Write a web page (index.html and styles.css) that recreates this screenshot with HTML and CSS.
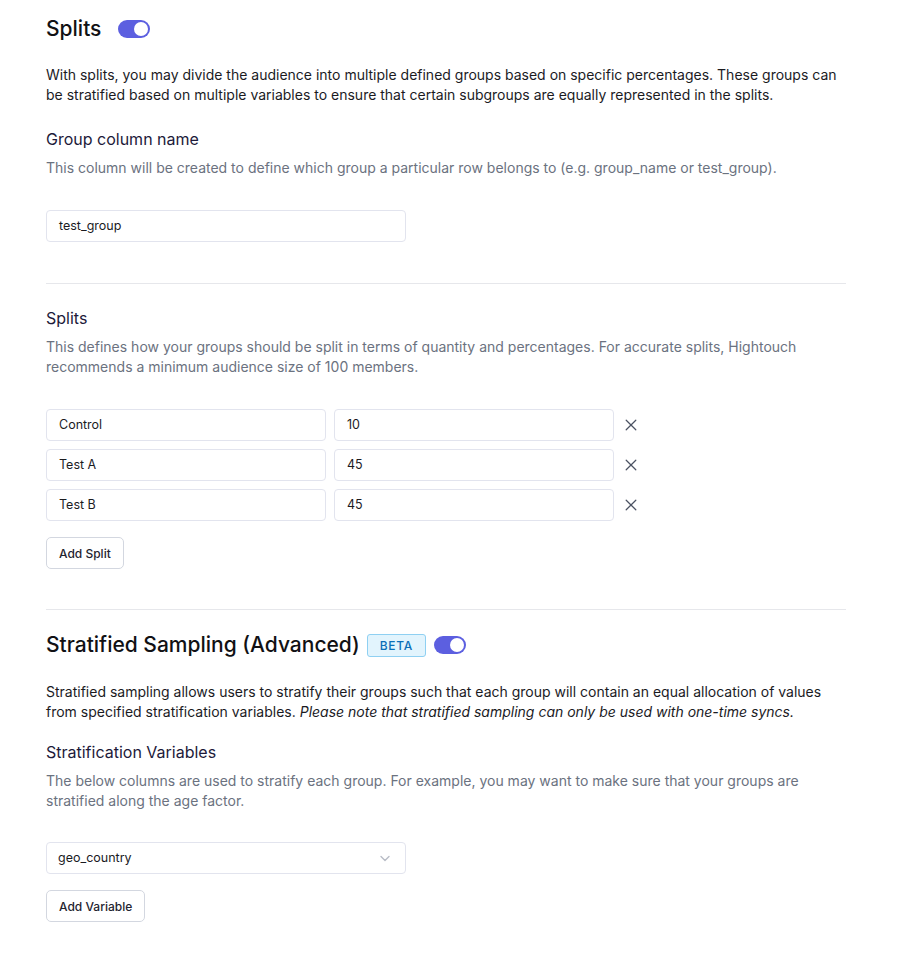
FILE: index.html
```html
<!DOCTYPE html>
<html>
<head>
<meta charset="utf-8">
<link rel="stylesheet" href="styles.css">
</head>
<body>
<main class="page">
  <section class="section">
    <div class="title-row">
      <h1 class="title">Splits</h1>
      <span class="toggle"><span class="knob"></span></span>
    </div>
    <p class="intro">With splits, you may divide the audience into multiple defined groups based on specific percentages. These groups can be stratified based on multiple variables to ensure that certain subgroups are equally represented in the splits.</p>
    <h2 class="label">Group column name</h2>
    <p class="help">This column will be created to define which group a particular row belongs to (e.g. group_name or test_group).</p>
    <div class="input wide">test_group</div>
  </section>

  <hr class="divider">

  <section class="section">
    <h2 class="label first">Splits</h2>
    <p class="help">This defines how your groups should be split in terms of quantity and percentages. For accurate splits, Hightouch recommends a minimum audience size of 100 members.</p>
    <div class="rows">
      <div class="row">
        <div class="input half">Control</div>
        <div class="input half">10</div>
        <svg class="x" width="14" height="14" viewBox="0 0 14 14"><path d="M2.2 2.2l9.6 9.6M11.8 2.2l-9.6 9.6" stroke="#4b5262" stroke-width="1.25" stroke-linecap="round"/></svg>
      </div>
      <div class="row">
        <div class="input half">Test A</div>
        <div class="input half">45</div>
        <svg class="x" width="14" height="14" viewBox="0 0 14 14"><path d="M2.2 2.2l9.6 9.6M11.8 2.2l-9.6 9.6" stroke="#4b5262" stroke-width="1.25" stroke-linecap="round"/></svg>
      </div>
      <div class="row">
        <div class="input half">Test B</div>
        <div class="input half">45</div>
        <svg class="x" width="14" height="14" viewBox="0 0 14 14"><path d="M2.2 2.2l9.6 9.6M11.8 2.2l-9.6 9.6" stroke="#4b5262" stroke-width="1.25" stroke-linecap="round"/></svg>
      </div>
    </div>
    <button class="btn">Add Split</button>
  </section>

  <hr class="divider second">

  <section class="section">
    <div class="title-row after-divider">
      <h1 class="title">Stratified Sampling (Advanced)</h1>
      <span class="badge">BETA</span>
      <span class="toggle"><span class="knob"></span></span>
    </div>
    <p class="intro">Stratified sampling allows users to stratify their groups such that each group will contain an equal allocation of values from specified stratification variables. <em>Please note that stratified sampling can only be used with one-time syncs.</em></p>
    <h2 class="label tight">Stratification Variables</h2>
    <p class="help">The below columns are used to stratify each group. For example, you may want to make sure that your groups are stratified along the age factor.</p>
    <div class="input wide select">
      <span>geo_country</span>
      <svg width="14" height="14" viewBox="0 0 14 14"><path d="M3 5.5l4 4 4-4" fill="none" stroke="#b8bcc6" stroke-width="1.4" stroke-linecap="round" stroke-linejoin="round"/></svg>
    </div>
    <button class="btn">Add Variable</button>
  </section>
</main>
</body>
</html>
```

FILE: styles.css
```css
* { box-sizing: border-box; }
html, body { margin: 0; padding: 0; background: #fff; }
body {
  font-family: Inter, "Noto Sans", "Liberation Sans", sans-serif;
  color: #1b1b1f;
}
.page {
  width: 800px;
  margin-left: 46px;
  padding-top: 15px;
}
.title-row {
  display: flex;
  align-items: center;
  gap: 17px;
  height: 28px;
}
.title-row.after-divider {
  margin-top: 21px;
  gap: 7px;
}
.title-row.after-divider .badge { margin-right: 1px; }
.title {
  margin: 0;
  font-size: 21px;
  line-height: 28px;
  font-weight: 500;
  color: #111114;
}
.toggle {
  width: 32px;
  height: 18px;
  border-radius: 9px;
  background: #5c5fe0;
  display: flex;
  align-items: center;
  justify-content: flex-end;
  padding: 2px;
}
.knob {
  width: 14px;
  height: 14px;
  border-radius: 50%;
  background: #fff;
}
.badge {
  font-size: 12px;
  font-weight: 500;
  letter-spacing: 0.06em;
  color: #0b6fb8;
  background: #e2f4fd;
  border: 1px solid #8fd0f2;
  border-radius: 3px;
  height: 23px;
  line-height: 21px;
  padding: 0 12px;
}
.intro {
  margin: 22px 0 0;
  font-size: 14px;
  line-height: 20px;
  color: #1b1b1f;
}
.after-divider + .intro { margin-top: 23px; }
.intro em { font-style: italic; }
.label {
  margin: 22px 0 0;
  font-size: 16px;
  line-height: 24px;
  font-weight: 400;
  color: #1d1a3a;
}
.label.first { margin-top: 22px; }
.label.tight { margin-top: 18px; }
.help {
  margin: 7px 0 0;
  font-size: 14px;
  line-height: 20px;
  color: #6b7280;
}
.input {
  height: 32px;
  border: 1px solid #e2e4ee;
  border-radius: 4px;
  font-size: 12.5px;
  color: #1b1b1f;
  padding: 0 12px 1px;
  display: flex;
  align-items: center;
  background: #fff;
}
.wide { width: 360px; margin-top: 32px; }
.select { justify-content: space-between; margin-top: 31px; padding-left: 11px; padding-right: 13px; }
.rows {
  margin-top: 32px;
  display: flex;
  flex-direction: column;
  gap: 8px;
}
.row {
  display: flex;
  align-items: center;
  gap: 8px;
}
.half { width: 280px; }
.x { margin-left: 2px; }
.btn {
  display: block;
  margin-top: 16px;
  height: 32px;
  padding: 0 12px;
  font-family: inherit;
  font-size: 12px;
  font-weight: 500;
  color: #1f2430;
  background: #fff;
  border: 1px solid #d3d7e0;
  border-radius: 5px;
}
.divider {
  border: 0;
  border-top: 1px solid #e6e7eb;
  margin: 41px 0 0;
  height: 0;
}
.divider.second { margin-top: 40px; }
```
